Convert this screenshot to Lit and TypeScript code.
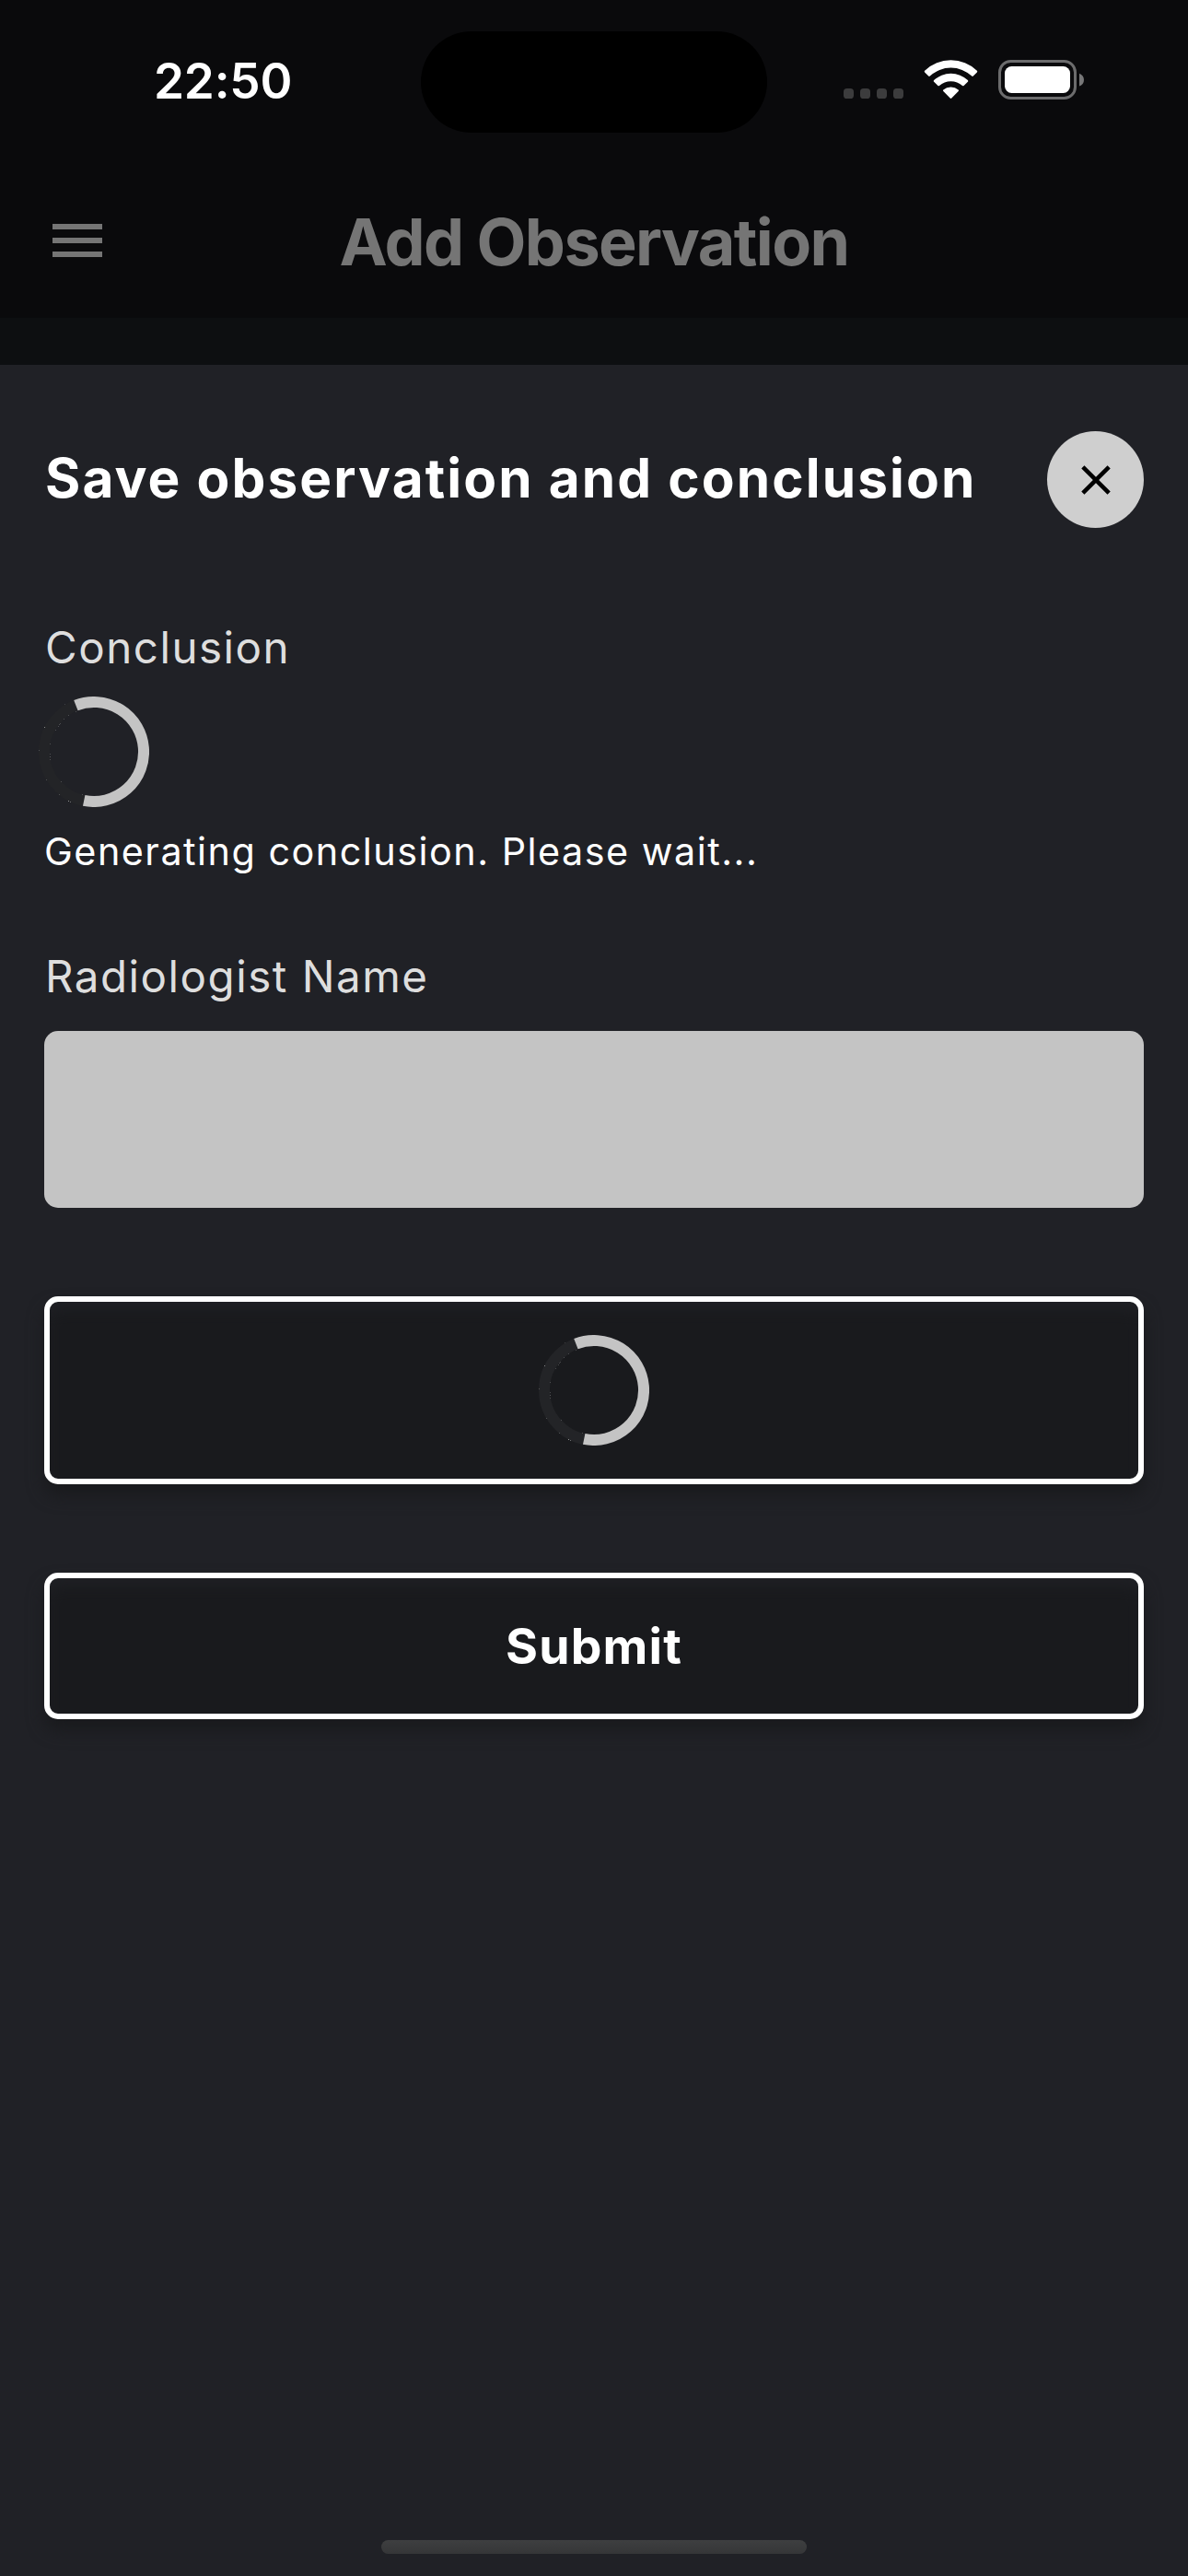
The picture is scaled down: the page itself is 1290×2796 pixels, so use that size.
import { LitElement, html, css, svg } from "lit";
import { customElement } from "lit/decorators.js";

// Faint anti-aliasing specks along the spinner track: x, y, opacity
const SPECKS: Array<[number, number, number]> = [
  [28, 8, 0.15], [6, 33, 0.45], [0, 58, 0.2], [8, 90, 0.2],
  [22, 106, 0.2], [32, 113, 0.5], [34, 114, 0.35],
  [12, 51, 0.2], [12, 62, 0.2], [12, 65, 0.25], [12, 68, 0.2], [18, 36, 0.2],
  [21, 32, 0.2], [22, 30, 0.2], [23, 29, 0.2], [27, 24, 0.2],
  [32, 20, 0.2], [40, 16, 0.2], [24, 92, 0.2], [47, 106, 0.2],
];

@customElement("busy-spinner")
export class BusySpinner extends LitElement {
  static styles = css`
    :host { display: block; width: 120px; height: 120px; }
    .ring { display: block; }
  `;
  render() {
    return html`
      <svg class="ring" width="120" height="120" viewBox="0 0 120 120">
        <circle cx="60" cy="60" r="54" fill="none" stroke="#232427" stroke-width="12"></circle>
        <path d="M40.4 9.7A54 54 0 1 1 49.2 112.9" fill="none" stroke="#c4c4c4" stroke-width="12"></path>
        ${SPECKS.map(([x, y, o]) => svg`<rect x=${x} y=${y} width="1" height="1" fill="#fff" opacity=${o}></rect>`)}
      </svg>
    `;
  }
}

@customElement("status-bar")
export class StatusBar extends LitElement {
  static styles = css`
    :host { display: block; }
    .bar { display: grid; grid-template-columns: 457px 376px 457px; height: 177px; }
    .time {
      padding: 58px 0 0 167px; font-size: 53px; line-height: 60px; font-weight: 600;
      letter-spacing: -0.2px; color: #fff; white-space: nowrap;
    }
    .island { margin-top: 34px; height: 110px; border-radius: 55px; background: #000; }
    .icons { display: block; margin: 60px 0 0 77px; }
  `;
  render() {
    return html`
      <div class="bar">
        <div class="time">22:50</div>
        <div class="island"></div>
        <svg class="icons" width="280" height="54" viewBox="910 60 280 54">
          <g fill="#3c3c3d">
            <rect x="916" y="96" width="11" height="11" rx="3.6"></rect>
            <rect x="934" y="96" width="11" height="11" rx="3.6"></rect>
            <rect x="952" y="96" width="11" height="11" rx="3.6"></rect>
            <rect x="970" y="96" width="11" height="11" rx="3.6"></rect>
          </g>
          <g fill="#fff">
            <path d="M1004.1 76.8Q1003.4 77.6 1004.1 78.4L1008.2 82.6Q1009 83.4 1009.8 82.6A33 33 0 0 1 1055.2 82.6Q1056 83.4 1056.8 82.6L1060.9 78.4Q1061.6 77.6 1060.9 76.8A41 41 0 0 0 1004.1 76.8Z"></path>
            <path d="M1014.1 87.1Q1013.4 87.9 1014.1 88.7L1018.4 93Q1019.2 93.7 1020 93A18.5 18.5 0 0 1 1045 93Q1045.8 93.7 1046.6 93L1050.9 88.7Q1051.6 87.9 1050.9 87.1A27 27 0 0 0 1014.1 87.1Z"></path>
            <path d="M1024.3 97.4Q1023.5 98.2 1024.3 99L1031.7 106.5Q1032.5 107.3 1033.3 106.5L1040.7 99Q1041.5 98.2 1040.7 97.4A13 13 0 0 0 1024.3 97.4Z"></path>
          </g>
          <rect x="1085.5" y="66.5" width="82" height="40" rx="12" fill="none" stroke="#6c6c6d" stroke-width="3"></rect>
          <rect x="1091" y="72" width="71" height="29" rx="7.5" fill="#fff"></rect>
          <path d="M1172 79.8C1175.2 81 1177 83.5 1177 86.7S1175.2 92.400 1172 93.6Z" fill="#777778"></path>
        </svg>
      </div>
    `;
  }
}

@customElement("app-root")
export class AppRoot extends LitElement {
  static styles = css`
    :host {
      display: block; width: 1290px; height: 2796px;
      font-family: Inter, "Liberation Sans", sans-serif;
    }
    .screen { display: flex; flex-direction: column; height: 2796px; background: #0d0f11; overflow: hidden; }
    .top { height: 345px; background: #0a0a0c; }
    .nav { display: grid; grid-template-columns: 168px 1fr 168px; align-items: center; height: 168px; }
    .menu { display: block; margin-left: 48px; }
    .nav-title {
      margin: 0; padding-top: 3px; text-align: center; font-size: 70px; line-height: 84px; font-weight: 700;
      letter-spacing: -1.6px; color: #757575; white-space: nowrap;
    }
    .sheet {
      isolation: isolate; display: flex; flex-direction: column; flex: 1; margin-top: 51px;
      padding: 72px 48px 24px; background: #202126;
    }
    .sheet-head { display: flex; justify-content: space-between; align-items: center; height: 105px; }
    .heading {
      margin: 0; padding: 0 0 4px 1px; font-size: 58.5px; line-height: 72px; font-weight: 700;
      letter-spacing: 2.1px; color: #fff; white-space: nowrap;
    }
    .close {
      display: flex; align-items: center; justify-content: center; width: 105px; height: 105px; padding: 0;
      border: 0; border-radius: 50%; background: #cfcfcf;
    }
    .label {
      padding-left: 1px; font-size: 47.5px; line-height: 60px;
      letter-spacing: 1.5px; color: #dedede; white-space: nowrap;
    }
    .conclusion { margin-top: 100px; }
    .spinner { margin: 23px 0 23px -6px; }
    .note { font-size: 41.3px; line-height: 50px; letter-spacing: 1.5px; color: #fff; white-space: nowrap; }
    .name { margin-top: 81px; }
    .field { height: 192px; margin-top: 29px; border-radius: 15px; background: #c4c4c4; }
    .button {
      position: relative; display: flex; align-items: center; justify-content: center;
      box-sizing: border-box; width: 100%; margin-top: 96px; padding: 0; border: 6px solid #fff;
      border-radius: 15px; background: transparent; color: #fff; font-family: inherit;
      font-size: 53.5px; font-weight: 700; letter-spacing: 1.2px;
    }
    .button::before {
      content: ""; position: absolute; z-index: -1; inset: 6px -6px -18px; border-radius: 15px;
      background: #191a1d; filter: blur(9px);
    }
    .loading { height: 204px; }
    .submit { height: 159px; }
    .home {
      width: 462px; height: 15px; margin: auto auto 0; border-radius: 8px;
      background: linear-gradient(#3e3f40, #353638);
    }
  `;
  render() {
    return html`
      <div class="screen">
        <div class="top">
          <status-bar></status-bar>
          <div class="nav">
            <svg class="menu" width="72" height="72" viewBox="0 0 24 24" fill="#757575">
              <path d="M3 18h18v-2H3v2zm0-5h18v-2H3v2zm0-7v2h18V6H3z"></path>
            </svg>
            <h1 class="nav-title">Add Observation</h1>
          </div>
        </div>
        <div class="sheet">
          <div class="sheet-head">
            <h2 class="heading">Save observation and conclusion</h2>
            <button class="close" aria-label="Close">
              <svg width="54" height="54" viewBox="0 0 24 24" fill="#000">
                <path d="M19 6.410 17.590 5 12 10.590 6.410 5 5 6.410 10.590 12 5 17.590 6.410 19 12 13.410 17.590 19 19 17.590 13.410 12z"></path>
              </svg>
            </button>
          </div>
          <div class="label conclusion">Conclusion</div>
          <busy-spinner class="spinner"></busy-spinner>
          <div class="note">Generating conclusion. Please wait...</div>
          <div class="label name">Radiologist Name</div>
          <div class="field"></div>
          <button class="button loading"><busy-spinner></busy-spinner></button>
          <button class="button submit">Submit</button>
          <div class="home"></div>
        </div>
      </div>
    `;
  }
}
